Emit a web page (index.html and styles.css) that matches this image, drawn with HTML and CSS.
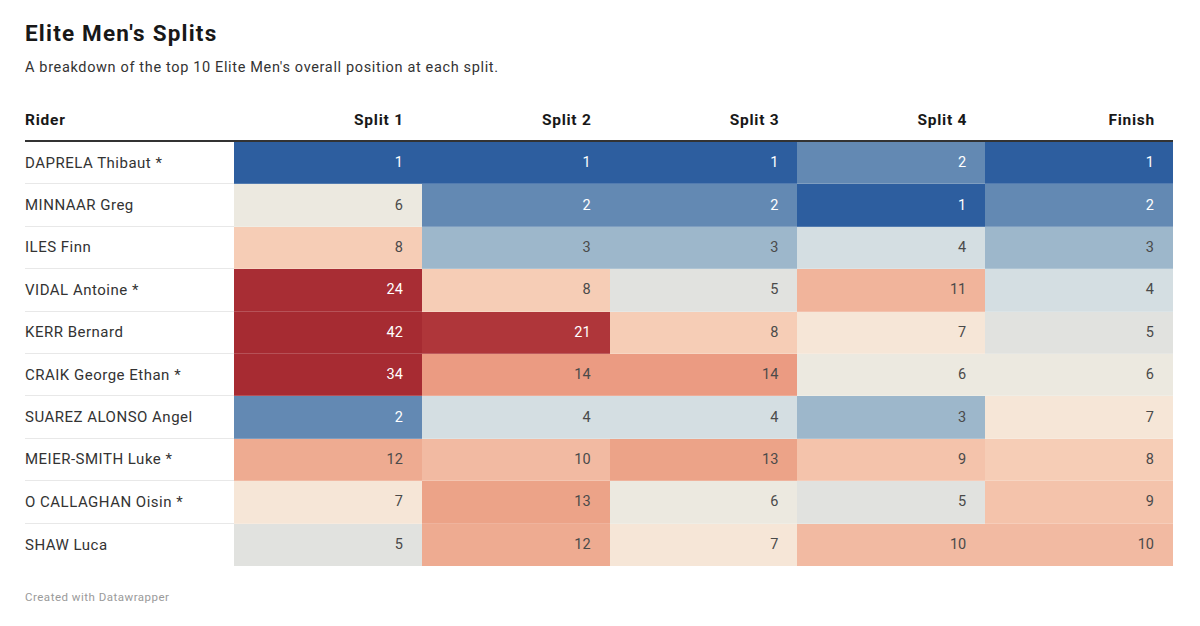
FILE: index.html
```html
<!DOCTYPE html>
<html lang="en">
<head>
<meta charset="utf-8">
<title>Elite Men's Splits</title>
<link rel="stylesheet" href="styles.css">
</head>
<body>
<div class="chart">
  <h1 class="title">Elite Men's Splits</h1>
  <p class="desc">A breakdown of the top 10 Elite Men's overall position at each split.</p>
  <div class="table">
    <div class="row head">
      <div class="cell name">Rider</div>
      <div class="cell num">Split 1</div>
      <div class="cell num">Split 2</div>
      <div class="cell num">Split 3</div>
      <div class="cell num">Split 4</div>
      <div class="cell num">Finish</div>
    </div>
    <div class="row">
      <div class="cell name">DAPRELA Thibaut *</div>
      <div class="cell num v1">1</div><div class="cell num v1">1</div><div class="cell num v1">1</div><div class="cell num v2">2</div><div class="cell num v1">1</div>
    </div>
    <div class="row">
      <div class="cell name">MINNAAR Greg</div>
      <div class="cell num v6">6</div><div class="cell num v2">2</div><div class="cell num v2">2</div><div class="cell num v1">1</div><div class="cell num v2">2</div>
    </div>
    <div class="row">
      <div class="cell name">ILES Finn</div>
      <div class="cell num v8">8</div><div class="cell num v3">3</div><div class="cell num v3">3</div><div class="cell num v4">4</div><div class="cell num v3">3</div>
    </div>
    <div class="row">
      <div class="cell name">VIDAL Antoine *</div>
      <div class="cell num v24">24</div><div class="cell num v8">8</div><div class="cell num v5">5</div><div class="cell num v11">11</div><div class="cell num v4">4</div>
    </div>
    <div class="row">
      <div class="cell name">KERR Bernard</div>
      <div class="cell num v42">42</div><div class="cell num v21">21</div><div class="cell num v8">8</div><div class="cell num v7">7</div><div class="cell num v5">5</div>
    </div>
    <div class="row">
      <div class="cell name">CRAIK George Ethan *</div>
      <div class="cell num v34">34</div><div class="cell num v14">14</div><div class="cell num v14">14</div><div class="cell num v6">6</div><div class="cell num v6">6</div>
    </div>
    <div class="row">
      <div class="cell name">SUAREZ ALONSO Angel</div>
      <div class="cell num v2">2</div><div class="cell num v4">4</div><div class="cell num v4">4</div><div class="cell num v3">3</div><div class="cell num v7">7</div>
    </div>
    <div class="row">
      <div class="cell name">MEIER-SMITH Luke *</div>
      <div class="cell num v12">12</div><div class="cell num v10">10</div><div class="cell num v13">13</div><div class="cell num v9">9</div><div class="cell num v8">8</div>
    </div>
    <div class="row">
      <div class="cell name">O CALLAGHAN Oisin *</div>
      <div class="cell num v7">7</div><div class="cell num v13">13</div><div class="cell num v6">6</div><div class="cell num v5">5</div><div class="cell num v9">9</div>
    </div>
    <div class="row last">
      <div class="cell name">SHAW Luca</div>
      <div class="cell num v5">5</div><div class="cell num v12">12</div><div class="cell num v7">7</div><div class="cell num v10">10</div><div class="cell num v10">10</div>
    </div>
  </div>
  <p class="credit">Created with Datawrapper</p>
</div>
</body>
</html>
```
FILE: styles.css
```css
html, body {
  margin: 0;
  padding: 0;
  background: #ffffff;
}
body {
  font-family: Roboto, "Liberation Sans", Arial, sans-serif;
  color: #333333;
}
.chart {
  width: 1148px;
  padding: 19px 0 0 25px;
}
.title {
  margin: 0;
  font-size: 22.5px;
  line-height: 28px;
  font-weight: 700;
  color: #181818;
  letter-spacing: 1.2px;
}
.desc {
  margin: 11px 0 0 0;
  font-size: 14.5px;
  line-height: 20px;
  color: #333333;
  letter-spacing: 0.65px;
}
.table {
  margin-top: 22px;
}
.row {
  display: grid;
  grid-template-columns: 209px repeat(5, 1fr);
  height: 42.4px;
}
.row.head {
  height: 40px;
  border-bottom: 2px solid #333333;
}
.cell {
  display: flex;
  align-items: center;
  font-size: 14.5px;
  box-sizing: border-box;
}
.head .cell {
  font-weight: 700;
  font-size: 15.5px;
  letter-spacing: 0.75px;
  color: #181818;
}
.name {
  border-bottom: 1px solid #e8e8e8;
  color: #333333;
  font-size: 15px;
  letter-spacing: 0.5px;
}
.head .name { border-bottom: none; }
.num {
  justify-content: flex-end;
  padding-right: 19px;
  color: #4a4a4a;
  border-bottom: 1px solid rgba(255, 255, 255, 0.18);
}
.head .num { border-bottom: none; padding-right: 18px; }
.last .cell { border-bottom: none; }

.v1 { background: #2d5e9f; color: #ffffff; }
.v2 { background: #6389b3; color: #ffffff; }
.v3 { background: #9db7cb; }
.v4 { background: #d4dee2; }
.v5 { background: #e1e2df; }
.v6 { background: #ece9e0; }
.v7 { background: #f6e6d7; }
.v8 { background: #f6cdb6; }
.v9 { background: #f4c3ab; }
.v10 { background: #f2baa2; }
.v11 { background: #f1b49b; }
.v12 { background: #eeab91; }
.v13 { background: #eca388; }
.v14 { background: #eb9b82; }
.v21 { background: #af363a; color: #ffffff; }
.v24 { background: #a82d34; color: #ffffff; }
.v34 { background: #a72b32; color: #ffffff; }
.v42 { background: #a62b32; color: #ffffff; }

.credit {
  margin: 23px 0 0 0;
  font-size: 11.5px;
  line-height: 16px;
  color: #9a9a9a;
  letter-spacing: 0.5px;
}
```
